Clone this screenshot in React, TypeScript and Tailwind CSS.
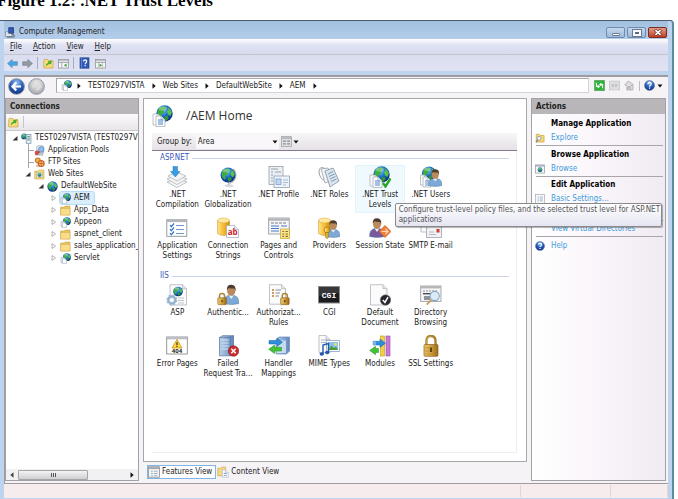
import type { ReactNode } from 'react';
import clsx from 'clsx';

type IconProps = { className?: string };

/* ---------- shared icon parts ---------- */

function Defs() {
  return (
    <svg className="absolute h-0 w-0" aria-hidden="true">
      <defs>
        <radialGradient id="sea" cx="40%" cy="30%" r="75%">
          <stop offset="0" stopColor="#7fd0ff" />
          <stop offset="0.45" stopColor="#1f6fd0" />
          <stop offset="1" stopColor="#08246e" />
        </radialGradient>
        <linearGradient id="gold" x1="0" x2="1">
          <stop offset="0" stopColor="#ffe58a" />
          <stop offset="0.5" stopColor="#f5bb35" />
          <stop offset="1" stopColor="#c88a10" />
        </linearGradient>
        <linearGradient id="lock" x1="0" x2="1">
          <stop offset="0" stopColor="#e8c56a" />
          <stop offset="0.5" stopColor="#d3a140" />
          <stop offset="1" stopColor="#95661a" />
        </linearGradient>
        <linearGradient id="blueBox" x1="0" x2="1">
          <stop offset="0" stopColor="#b9cfe8" />
          <stop offset="1" stopColor="#5f86bd" />
        </linearGradient>
        <radialGradient id="nav" cx="50%" cy="25%" r="75%">
          <stop offset="0" stopColor="#9cc4f2" />
          <stop offset="0.5" stopColor="#2c63bd" />
          <stop offset="1" stopColor="#0f2f7c" />
        </radialGradient>
        <radialGradient id="navOff" cx="50%" cy="30%" r="75%">
          <stop offset="0" stopColor="#ededed" />
          <stop offset="1" stopColor="#a3a3a6" />
        </radialGradient>
      </defs>
    </svg>
  );
}

function Globe({ cx, cy, r }: { cx: number; cy: number; r: number }) {
  return (
    <g transform={`translate(${cx} ${cy}) scale(${r / 10})`}>
      <circle r="10" fill="url(#sea)" />
      <path d="M-8 -5 Q-4 -9 0 -9 L2 -6 L-1 -4 L0 -1 L-4 1 L-3 5 L-5 6 L-8 2 Z" fill="#3fae3a" />
      <path d="M3 -8 Q8 -6 9 -1 L7 3 L4 1 L3 -3 L5 -5 Z" fill="#59c24c" />
      <path d="M0 3 L4 3 L5 6 L2 9 L0 7 Z" fill="#2e9636" />
      <ellipse cx="-2" cy="-6" rx="5" ry="2.5" fill="#fff" opacity="0.3" />
    </g>
  );
}

function Padlock({ x, y }: { x: number; y: number }) {
  return (
    <g transform={`translate(${x} ${y})`}>
      <path d="M2 5 V3 Q2 0.8 4.5 0.8 Q7 0.8 7 3 V5" fill="none" stroke="#a98331" strokeWidth="1.5" />
      <rect x="0.3" y="5" width="8.6" height="7" rx="1" fill="url(#lock)" stroke="#8d6420" strokeWidth="0.6" />
      <path d="M4.6 7.3 V9.6" stroke="#4e3508" strokeWidth="1.2" />
    </g>
  );
}

function Person({ x, y, s = 1, fill = '#7da9d6' }: { x: number; y: number; s?: number; fill?: string }) {
  return (
    <g transform={`translate(${x} ${y}) scale(${s})`}>
      <path d="M0 19 Q0 12 5 11 H10 Q15 12 15 19 Q8 21 0 19 Z" fill={fill} stroke="#56799f" strokeWidth="0.5" />
      <path d="M5 11 L7.5 14.5 L10 11 Z" fill="#e8f0f8" />
      <ellipse cx="7.5" cy="6.5" rx="4" ry="5" fill="#b98a5c" />
      <path d="M3.3 6 Q3 0.6 7.8 0.8 Q12.4 1 11.7 7 L10.6 4.4 Q7 4.6 5 3.8 Z" fill="#4d3c30" />
    </g>
  );
}

function Database({ x, y }: { x: number; y: number }) {
  return (
    <g transform={`translate(${x} ${y})`}>
      <path d="M0 3 V16 Q6 20 12 16 V3 Z" fill="url(#gold)" stroke="#c58e20" strokeWidth="0.5" />
      <ellipse cx="6" cy="3" rx="6" ry="2.4" fill="#ffe9a0" stroke="#d6a02c" strokeWidth="0.5" />
    </g>
  );
}

function Page({ x, y, w, h }: { x: number; y: number; w: number; h: number }) {
  return (
    <g transform={`translate(${x} ${y})`}>
      <path d={`M0 0 H${w - 4} L${w} 4 V${h} H0 Z`} fill="#fbfbfc" stroke="#a5a9b0" strokeWidth="0.7" />
      <path d={`M${w - 4} 0 V4 H${w}`} fill="#e3e5ea" stroke="#a5a9b0" strokeWidth="0.6" />
    </g>
  );
}

function Big({ children }: { children: ReactNode }) {
  return (
    <svg viewBox="0 0 22 22" className="h-[22px] w-[22px] shrink-0" aria-hidden="true">
      {children}
    </svg>
  );
}

function Small({ children, className = 'h-[11px] w-[11px]' }: { children: ReactNode; className?: string }) {
  return (
    <svg viewBox="0 0 16 16" className={clsx('shrink-0', className)} aria-hidden="true">
      {children}
    </svg>
  );
}

/* ---------- feature icons ---------- */

const CompilationIcon = () => (
  <Big>
    <g fill="#f4f5f6" stroke="#a8acb0" strokeWidth="0.7">
      <path d="M1 16 L11 12 L21 16 L11 21.5 Z" />
      <path d="M1 13 L11 9 L21 13 L11 18.5 Z" />
      <path d="M2 10 L11 6 L20 10 L11 15 Z" />
    </g>
    <path d="M7 0.5 H11.5 V5.5 H14 L9.3 11 L4.5 5.5 H7 Z" fill="#3c9be0" stroke="#1b74bd" strokeWidth="0.5" />
  </Big>
);

const GlobalizationIcon = () => (
  <Big>
    <path d="M8 19 Q12 17.5 16 19 Q18 21 12 21.3 Q6 21 8 19 Z" fill="#d9dadd" />
    <path d="M16.5 3 Q21 9 17 14.5 Q15 17 11.5 17.3 V19" fill="none" stroke="#b7b9bf" strokeWidth="1.3" />
    <Globe cx={11} cy={9} r={7.5} />
  </Big>
);

const ProfileIcon = () => (
  <Big>
    <rect x="1" y="0.5" width="14" height="18" fill="#eceff2" stroke="#98a0aa" strokeWidth="0.8" />
    <path d="M3 3 H10 M3 6 H5 M7 6 H13 M3 9 H5 M3 12 H5 M3 15 H5" stroke="#9aa4b0" strokeWidth="1.1" />
    <rect x="6" y="10" width="15.5" height="11.5" fill="#eef3f9" stroke="#8ea2ba" strokeWidth="0.8" />
    <rect x="8" y="13" width="5" height="5.5" fill="#c3d8ef" stroke="#6e97c7" strokeWidth="0.7" />
    <path d="M15 14 H20 M15 16.5 H20 M15 19 H18" stroke="#9db3cc" strokeWidth="0.9" />
  </Big>
);

const RolesIcon = () => (
  <Big>
    <path d="M8 3 Q1 -1 1 6 Q2 13 6 14" fill="none" stroke="#8c949c" strokeWidth="0.9" />
    <path d="M3 3 L10 2 L14 14 L7 17 Z" fill="#f0f2f4" stroke="#9aa3ad" strokeWidth="0.8" />
    <path d="M7 5 L15 2 L21 15 L12 21 Z" fill="#dbe5ee" stroke="#7f91a3" strokeWidth="0.8" />
    <path d="M10 8 L15 5.5 M11 10.5 L16.5 8 M12 13 L17.5 10.5 M13 15.5 L18.5 13" stroke="#7390b0" strokeWidth="0.9" />
  </Big>
);

const TrustIcon = () => (
  <Big>
    <Globe cx={12.5} cy={8.5} r={8.2} />
    <Page x={1} y={9} w={9} h={11} />
    <Page x={4} y={11} w={9} h={10.5} />
    <path d="M6 15 H11 M6 17 H11 M6 19 H11" stroke="#4a87d0" strokeWidth="1" />
    <path d="M14 17 L16.5 20.5 L21.5 12.5" fill="none" stroke="#27a627" strokeWidth="2.4" />
  </Big>
);

const UsersIcon = () => (
  <Big>
    <Globe cx={9} cy={7.5} r={7} />
    <Page x={0.5} y={9} w={8} h={10} />
    <Page x={3} y={11} w={8} h={10} />
    <path d="M5 15 H9 M5 17 H9 M5 19 H9" stroke="#4a87d0" strokeWidth="0.9" />
    <Person x={8.5} y={2.5} s={0.9} />
  </Big>
);

const SettingsIcon = () => (
  <Big>
    <rect x="0.8" y="2.8" width="20" height="16.5" fill="#fff" stroke="#8f9296" strokeWidth="0.9" />
    <path d="M1 4 H20.5" stroke="#b4b8bd" strokeWidth="2.2" />
    <path d="M4 8 L5.3 9.8 L8 6.5 M4 12 L5.3 13.8 L8 10.5 M4 16 L5.3 17.8 L8 14.5" fill="none" stroke="#2b6fbe" strokeWidth="1.2" />
    <path d="M10 8.5 H18 M10 12.5 H18 M10 16.5 H18" stroke="#6f9acb" strokeWidth="1.2" />
  </Big>
);

const ConnectionIcon = () => (
  <Big>
    <Database x={0.5} y={0.5} />
    <Page x={9.5} y={8.5} w={12} h={12} />
    <text x="15.6" y="18" textAnchor="middle" fontSize="8" fontWeight="700" fill="#c9222a" fontFamily="Open Sans">ab</text>
  </Big>
);

const PagesIcon = () => (
  <Big>
    <rect x="0.7" y="1" width="20.5" height="16" fill="#f5f6f8" stroke="#8f9296" strokeWidth="0.8" />
    <path d="M1 2.6 H21" stroke="#b3b6bb" strokeWidth="2.4" />
    <path d="M3 6 H19" stroke="#777c84" strokeWidth="1" strokeDasharray="3 1" />
    <path d="M3 9 H11 M13 9 H19 M3 11.5 H11 M3 14 H11" stroke="#4a78c4" strokeWidth="1" />
    <rect x="12.5" y="12" width="9" height="9.5" fill="#fbe789" stroke="#c7a02c" strokeWidth="0.7" />
    <path d="M14.3 14.5 H16.2 M17.5 14.5 H20 M14.3 17 H16.2 M17.5 17 H20 M14.3 19.4 H16.2 M17.5 19.4 H20" stroke="#8a7330" strokeWidth="1.1" />
  </Big>
);

const ProvidersIcon = () => (
  <Big>
    <Database x={0.5} y={0.5} />
    <Person x={8.5} y={2.5} s={0.9} />
    <circle cx="9" cy="13" r="3" fill="url(#gold)" stroke="#9c7318" strokeWidth="0.7" />
    <path d="M7.6 15.5 H10.4 V20.5 L9 21.7 L7.6 20.5 Z" fill="#ddb23c" stroke="#9c7318" strokeWidth="0.6" />
  </Big>
);

const SessionIcon = () => (
  <Big>
    <Person x={0.5} y={0.5} s={1} fill="#76599f" />
    <path d="M16 8.5 L22 14.5 L16 20.5 L10 14.5 Z" fill="#f0803c" stroke="#c6561c" strokeWidth="0.7" />
    <path d="M12.5 14.5 H19 M16.5 12 L19 14.5 L16.5 17" fill="none" stroke="#ffd9b8" strokeWidth="1.1" />
  </Big>
);

const SmtpIcon = () => (
  <Big>
    <Page x={1} y={3} w={11} h={12} />
    <rect x="6.5" y="8" width="15" height="12.5" fill="#f0f2f5" stroke="#9ea3ab" strokeWidth="0.8" />
    <rect x="16.5" y="12" width="3" height="3.5" fill="#d33a32" />
    <path d="M9 15 H14 M9 17.5 H16" stroke="#a9b3c0" strokeWidth="0.9" />
  </Big>
);

const AspIcon = () => (
  <Big>
    <Page x={4} y={0.7} w={16.5} h={20.3} />
    <Globe cx={12} cy={7.5} r={4.8} />
    <path d="M12 14 H18 M12 16.5 H18 M12 19 H18" stroke="#b9bec6" strokeWidth="0.9" />
    <circle cx="5.8" cy="16" r="3.6" fill="#dce8f2" stroke="#8fafca" strokeWidth="2.2" />
    <circle cx="5.8" cy="16" r="4.9" fill="none" stroke="#9fbbd3" strokeWidth="1.3" strokeDasharray="2 1.85" />
    <circle cx="5.8" cy="16" r="1.5" fill="#fff" />
  </Big>
);

const AuthenticationIcon = () => (
  <Big>
    <Person x={6.5} y={0} s={1.03} />
    <Padlock x={0.5} y={8.7} />
  </Big>
);

const AuthorizationIcon = () => (
  <Big>
    <Page x={1.5} y={0.7} w={16} h={19.5} />
    <path d="M4 6 H6 M4 9 H6 M4 12 H6" stroke="#c8742a" strokeWidth="1.5" />
    <path d="M7.5 6 H13 M7.5 9 H12 M7.5 12 H11" stroke="#878d96" strokeWidth="1" />
    <Padlock x={12.3} y={8.7} />
  </Big>
);

const CgiIcon = () => (
  <Big>
    <rect x="0.5" y="2.5" width="21" height="16.5" fill="#1c1c1e" stroke="#8c8c8f" strokeWidth="1" />
    <path d="M1 3 H21 V9 L1 12 Z" fill="#4a4a4d" opacity="0.6" />
    <text x="11" y="13.5" textAnchor="middle" fontSize="8" fontWeight="700" fill="#fff" fontFamily="Liberation Mono">CGI</text>
  </Big>
);

const DefaultDocIcon = () => (
  <Big>
    <Page x={1.5} y={0.7} w={16.5} h={20.3} />
    <circle cx="16.5" cy="16" r="5.3" fill="#25272b" stroke="#84888e" strokeWidth="0.6" />
    <path d="M13.8 16 L16 18.4 L19 13.2" fill="none" stroke="#fff" strokeWidth="1.5" />
  </Big>
);

const DirectoryIcon = () => (
  <Big>
    <rect x="0.7" y="2" width="20.3" height="15.5" fill="#f4f4f6" stroke="#94979c" strokeWidth="0.8" />
    <path d="M1 3.3 H21" stroke="#b4b6ba" strokeWidth="2.2" />
    <path d="M3 7 H18" stroke="#8b8f96" strokeWidth="1.2" strokeDasharray="2 1" />
    <path d="M3 9.7 H12" stroke="#3d4046" strokeWidth="1.3" />
    <rect x="4" y="12" width="6" height="4" fill="#8f9298" />
    <circle cx="14.7" cy="12" r="4.6" fill="#d6e9f8" fillOpacity="0.9" stroke="#8aa6c4" strokeWidth="1.1" />
    <path d="M11.5 15.5 L6.8 20.6" stroke="#c89a5a" strokeWidth="1.8" />
  </Big>
);

const ErrorPagesIcon = () => (
  <Big>
    <rect x="0.7" y="2" width="20.6" height="17" fill="#fff" stroke="#8b8e93" strokeWidth="0.9" />
    <path d="M1 3.3 H21" stroke="#bbbdc2" strokeWidth="2" />
    <path d="M11 4.5 L16 13 H6 Z" fill="#ffd93b" stroke="#bd9414" strokeWidth="0.8" />
    <path d="M11 7.3 V10.2 M11 11 V12" stroke="#1f1f1f" strokeWidth="1.1" />
    <text x="11" y="18.4" textAnchor="middle" fontSize="6" fontWeight="700" fill="#222" fontFamily="Open Sans">404</text>
  </Big>
);

const FailedIcon = () => (
  <Big>
    <path d="M2.5 2.5 L5.5 0.7 H16.5 V19 L13.5 20.8 H2.5 Z" fill="url(#blueBox)" stroke="#54719a" strokeWidth="0.7" />
    <path d="M13.5 2.5 V20.5 M2.5 2.5 H13.5 L16.5 0.7" fill="none" stroke="#56749f" strokeWidth="0.6" />
    <path d="M4.5 5 H11.5 M4.5 8 H11.5 M4.5 11 H11.5 M4.5 14 H11.5" stroke="#dbe7f5" strokeWidth="1" />
    <circle cx="16.5" cy="16" r="5.2" fill="#cc2a2e" stroke="#8c1418" strokeWidth="0.6" />
    <path d="M14.3 13.8 L18.7 18.2 M18.7 13.8 L14.3 18.2" stroke="#fff" strokeWidth="1.6" />
  </Big>
);

const HandlerIcon = () => (
  <Big>
    <path d="M8 4.5 L11 2 H21.5 V16 L18.5 19 H8 Z" fill="url(#blueBox)" stroke="#6289b8" strokeWidth="0.7" />
    <path d="M9 5.5 H18 V18 H9 Z" fill="#d7e9f8" opacity="0.8" />
    <path d="M1 5.5 H9 V3 L14.5 7.3 L9 11.5 V9 H1 Z" fill="#2d8fdc" stroke="#1a65a6" strokeWidth="0.5" />
    <path d="M13.5 12.3 H6.5 V10 L0.7 14.3 L6.5 18.5 V16 H13.5 Z" fill="#42c236" stroke="#239022" strokeWidth="0.5" />
  </Big>
);

const MimeIcon = () => (
  <Big>
    <Page x={1} y={0.5} w={11} h={17} />
    <path d="M3 5 H9 M3 7.5 H9" stroke="#a4b2c8" strokeWidth="1" />
    <rect x="8.5" y="5.5" width="13" height="11" fill="#fff" stroke="#8da4be" strokeWidth="0.8" />
    <rect x="10" y="7" width="10" height="8" fill="#86c4ee" />
    <path d="M10 15 L13.5 10.5 L16 13 L18 11.5 L20 15 Z" fill="#4c9a3d" />
    <circle cx="17.6" cy="9.3" r="1.3" fill="#ffe04a" />
    <path d="M5 18.5 V10 L10.5 8.5 V17" fill="none" stroke="#2458b0" strokeWidth="1.4" />
    <ellipse cx="3.8" cy="19" rx="2.2" ry="1.7" fill="#2458b0" />
    <ellipse cx="9.2" cy="17.5" rx="2.2" ry="1.7" fill="#2458b0" />
  </Big>
);

const ModulesIcon = () => (
  <Big>
    <rect x="11.5" y="1" width="4" height="20" fill="#f3cf48" stroke="#c39a21" strokeWidth="0.6" />
    <rect x="17" y="1" width="4" height="20" fill="#c87ad6" stroke="#9b4cac" strokeWidth="0.6" />
    <path d="M4 6.3 H11 V4 L16.5 8.2 L11 12.4 V10 H4 Z" fill="#2d8fdc" stroke="#1a65a6" strokeWidth="0.5" />
    <path d="M4 6.3 V10 M6 6.3 V10" stroke="#fff" strokeWidth="0.7" />
    <path d="M9.5 13.5 H6.5 V11.3 L0.7 15.5 L6.5 19.7 V17.5 H9.5 Z" fill="#42c236" stroke="#239022" strokeWidth="0.5" />
  </Big>
);

const SslIcon = () => (
  <Big>
    <path d="M6.5 10 V6 Q6.5 1 11 1 Q15.5 1 15.5 6 V10" fill="none" stroke="#a9822f" strokeWidth="2.4" />
    <path d="M7 9 V6 Q7 1.8 10.6 1.6" fill="none" stroke="#ecd28a" strokeWidth="0.7" />
    <rect x="4" y="9.5" width="14" height="11.8" rx="1" fill="url(#lock)" stroke="#8d6420" strokeWidth="0.7" />
    <path d="M4.5 13 H17.5 M4.5 16 H17.5 M4.5 19 H17.5" stroke="#b98831" strokeWidth="0.7" />
    <path d="M11 12.6 V17" stroke="#4e3508" strokeWidth="1.7" />
  </Big>
);

/* ---------- small icons ---------- */

const UpFolderIcon = () => (
  <Small>
    <path d="M1 4 L2 2 H7 L8 4 H14.5 V14.5 H1 Z" fill="#f6dc7c" stroke="#c49a34" strokeWidth="0.9" />
    <path d="M4 12 Q4 8 8 7 L7 5 L13 3.5 L11.5 9.5 L10 8.3 Q7 9.5 4 12 Z" fill="#3fae2d" />
  </Small>
);

const FolderIcon = () => (
  <Small>
    <path d="M1 3 H6 L7.5 1.5 H14.5 V14.5 H1 Z" fill="#e9c463" stroke="#c79b3a" strokeWidth="0.8" />
    <path d="M1 5 H14.5 V14.5 H1 Z" fill="#f9dd8b" stroke="#d0a748" strokeWidth="0.7" />
  </Small>
);

const PaneIcon = ({ arrow = 'left' }: { arrow?: 'left' | 'right' }) => (
  <Small>
    <rect x="0.7" y="2" width="14.6" height="12.6" fill="#f6f7f8" stroke="#85888e" />
    <path d="M1 4 H15 M1 6.5 H15" stroke="#a8abb1" strokeWidth="1.4" />
    {arrow === 'left' ? <path d="M5.5 7 V14" stroke="#85888e" /> : <path d="M5 7 V14 M11 7 V14" stroke="#a8abb1" />}
    {arrow === 'left' ? <path d="M12.5 8 V13 L8.5 10.5 Z" fill="#3aa63a" /> : <path d="M6.5 8 V13 L10.5 10.5 Z" fill="#3aa63a" />}
  </Small>
);

const SiteIcon = ({ className }: IconProps) => (
  <Small className={className}>
    <Globe cx={10} cy={6} r={5.7} />
    <path d="M1.5 6.5 H5.5 L7.5 8.5 V14 H1.5 Z" fill="#f4f6f8" stroke="#9aa4b0" strokeWidth="0.8" />
    <path d="M3.5 8.5 H7.5 L9.5 10.5 V15.5 H3.5 Z" fill="#fff" stroke="#9aa4b0" strokeWidth="0.8" />
  </Small>
);

const WorldIcon = () => (
  <Small><Globe cx={8} cy={8} r={7.5} /></Small>
);

const ServerIcon = () => (
  <Small>
    <Globe cx={4.5} cy={5} r={4.2} />
    <rect x="7.5" y="2" width="7" height="13" fill="#e4edf5" stroke="#7490ac" />
    <path d="M9 5 H13 M9 7.5 H13 M9 10 H13" stroke="#4b8f63" strokeWidth="1.2" />
  </Small>
);

const PoolsIcon = () => (
  <Small>
    <rect x="4" y="1" width="10" height="11" rx="2" fill="#e9eef4" stroke="#8fa0b4" />
    <circle cx="10.5" cy="6.5" r="4" fill="#8fbce6" stroke="#5180b4" />
    <path d="M1 10 Q4 6 9 10 L6 15 H2 Z" fill="#c9514a" />
    <path d="M7 12 H13 V15 H7 Z" fill="#cdd3da" stroke="#8791a0" strokeWidth="0.6" />
  </Small>
);

const FtpIcon = () => (
  <Small>
    <circle cx="5.5" cy="5" r="3.5" fill="#f3b24e" stroke="#c8741f" strokeWidth="1.6" />
    <circle cx="10.5" cy="9.5" r="4.3" fill="#f7c27a" stroke="#cc6420" strokeWidth="1.7" />
    <path d="M7 9.5 H14 M10.5 6 V13 M3 13 H8" stroke="#b9551b" strokeWidth="1.1" />
  </Small>
);

const WebSitesIcon = () => (
  <Small>
    <path d="M1 3 H6 L7.5 1.5 H14.5 V14.5 H1 Z" fill="#f6da86" stroke="#c79b3a" strokeWidth="0.8" />
    <rect x="4" y="5" width="8" height="7" fill="#dff0df" stroke="#8aa47a" strokeWidth="0.6" />
    <Globe cx={8} cy={8.5} r={2.8} />
  </Small>
);

const HelpIcon = ({ className }: IconProps) => (
  <Small className={className}>
    <circle cx="8" cy="8" r="7.3" fill="url(#nav)" stroke="#6a7fa8" strokeWidth="0.8" />
    <path d="M5.6 6 Q5.8 3.6 8.1 3.6 Q10.5 3.7 10.4 5.9 Q10.3 7.2 9 8 Q8.1 8.6 8.1 9.7 M8.1 11 V12.8" fill="none" stroke="#fff" strokeWidth="1.8" />
  </Small>
);

const BookHelpIcon = () => (
  <Small className="h-[12px] w-[11px]">
    <rect x="1.5" y="0.5" width="13" height="15" fill="#3059b8" stroke="#1c3a86" />
    <path d="M3.5 1 V15" stroke="#7f9be0" />
    <path d="M6.5 5.8 Q6.8 3.5 9 3.5 Q11.3 3.7 11.1 5.9 Q11 7 9.8 7.9 Q9 8.6 9 9.7 M9 11 V12.8" fill="none" stroke="#fff" strokeWidth="1.7" />
  </Small>
);

const ComputerIcon = () => (
  <Small>
    <rect x="1" y="7" width="9" height="7" fill="#dfe4ea" stroke="#7b8592" />
    <rect x="5.5" y="1" width="7" height="8" fill="#3357b6" stroke="#1c306c" />
    <path d="M3 14.5 H14 M9 9 L14 13" stroke="#59616c" strokeWidth="1.6" />
  </Small>
);

const ArrowIcon = ({ dir, color }: { dir: 'left' | 'right'; color: string }) => (
  <Small>
    <path
      d={dir === 'left' ? 'M0.8 8 L7.5 2 V5.3 H15 V10.7 H7.5 V14 Z' : 'M15.2 8 L8.5 2 V5.3 H1 V10.7 H8.5 V14 Z'}
      fill={color}
      stroke="#55708a"
      strokeWidth="0.7"
    />
  </Small>
);

const NavCircle = ({ dir }: { dir: 'left' | 'right' }) => (
  <svg viewBox="0 0 18 18" className="h-[17px] w-[17px]" aria-hidden="true">
    <circle cx="9" cy="9" r="8.3" fill={dir === 'left' ? 'url(#nav)' : 'url(#navOff)'} stroke="#8b93a6" strokeWidth="1" />
    <path
      d={dir === 'left' ? 'M13.8 9 H5 M8.8 4.9 L4.7 9 L8.8 13.1' : 'M4.2 9 H13 M9.2 4.9 L13.3 9 L9.2 13.1'}
      fill="none"
      stroke={dir === 'left' ? '#fff' : '#dcdcde'}
      strokeWidth="2.3"
    />
  </svg>
);

const RefreshIcon = () => (
  <Small>
    <rect x="0.5" y="0.5" width="15" height="15" rx="1" fill="#2fb338" stroke="#5f9d60" />
    <path d="M3.5 4 V9.5 H7 M5.3 11.5 L7.8 9.5 L5.3 7.3 M12.5 12 V6.5 H9 M10.7 4.4 L8.4 6.5 L10.7 8.6" fill="none" stroke="#fff" strokeWidth="1.5" />
  </Small>
);

const StopIcon = () => (
  <Small>
    <rect x="0.5" y="1.5" width="15" height="13" fill="#dedee0" stroke="#c4c4c7" />
    <path d="M4 6 L7 10 M7 6 L4 10 M9 6 L12 10 M12 6 L9 10" stroke="#b0b0b4" strokeWidth="1.2" />
  </Small>
);

const HomeIcon = () => (
  <Small>
    <path d="M1 7 L6 1.5 L13 6 V14.5 H4 V8 Z" fill="#dddde0" stroke="#a2a2a8" />
    <path d="M6 14 V10 H9 V14 M10 8 H12" fill="none" stroke="#909096" />
  </Small>
);

const ExploreIcon = () => (
  <Small className="h-[10px] w-[10px]">
    <path d="M2 2 H7 L8.5 4 H14.5 V14.5 H2 Z" fill="#f5d97c" stroke="#c49a34" />
    <circle cx="6.5" cy="8.5" r="3.2" fill="#e8f3fb" stroke="#76808c" />
    <path d="M4.5 11 L1.5 15" stroke="#76808c" strokeWidth="1.8" />
  </Small>
);

const BrowseIcon = () => (
  <Small className="h-[10px] w-[10px]">
    <rect x="0.7" y="1.5" width="14.6" height="13" fill="#f6f9fb" stroke="#85888e" />
    <path d="M1 3 H15" stroke="#9aa5b4" strokeWidth="2" />
    <Globe cx={8} cy={9} r={3.8} />
  </Small>
);

const BasicIcon = () => (
  <Small className="h-[10px] w-[10px]">
    <rect x="1" y="1" width="14" height="14" fill="#f7f8f9" stroke="#9a9ea5" />
    <path d="M4 5 H6 M7.5 5 H12.5 M4 8 H6 M7.5 8 H12.5 M4 11 H6 M7.5 11 H12.5" stroke="#8fa5be" strokeWidth="1.3" />
  </Small>
);

const FeaturesIcon = () => (
  <Small className="h-[12px] w-[12px]">
    <rect x="0.7" y="1" width="14.6" height="14" fill="#f1f2f4" stroke="#83868c" />
    <path d="M1 2.8 H15" stroke="#a3a6ad" strokeWidth="2.5" />
    <path d="M4 7 H6.5 M8 7 H12.5 M4 10 H6.5 M8 10 H12.5 M4 13 H6.5 M8 13 H12.5" stroke="#9db0c8" strokeWidth="1.5" />
  </Small>
);

const ContentIcon = () => (
  <Small className="h-[12px] w-[12px]">
    <path d="M1 3 H5 L6.5 1.5 H11.5 V13 H1 Z" fill="#f4d988" stroke="#c79b3a" strokeWidth="0.8" />
    <Page x={7} y={5} w={8} h={10} />
    <path d="M9 10 H13 M9 12.5 H13" stroke="#5a8bc9" />
  </Small>
);

const ViewsIcon = () => (
  <Small>
    <rect x="0.7" y="1" width="14.6" height="14" fill="#dfe0e3" stroke="#97979c" />
    <path d="M1 3 H15" stroke="#aaaab0" strokeWidth="2" />
    <path d="M3 7.5 H7 M9 7.5 H13 M3 11.5 H7 M9 11.5 H13" stroke="#84888f" strokeWidth="2" />
  </Small>
);

const Caret = ({ dir }: { dir: 'down' | 'right' | 'left' }) => (
  <svg viewBox="0 0 6 6" className="h-[6px] w-[6px] shrink-0" aria-hidden="true">
    {dir === 'down' && <path d="M0.5 1.5 H5.5 L3 4.5 Z" fill="#111" />}
    {dir === 'right' && <path d="M1.5 0.3 V5.7 L4.7 3 Z" fill="#111" />}
    {dir === 'left' && <path d="M4.5 0.3 V5.7 L1.3 3 Z" fill="#444" />}
  </svg>
);

/* ---------- data ---------- */

type Node = { label: string; level: number; icon: () => ReactNode; state: 'open' | 'closed' | 'leaf'; selected?: boolean };

const tree: Node[] = [
  { label: 'TEST0297VISTA (TEST0297VIS', level: 0, icon: () => <ServerIcon />, state: 'open' },
  { label: 'Application Pools', level: 1, icon: () => <PoolsIcon />, state: 'leaf' },
  { label: 'FTP Sites', level: 1, icon: () => <FtpIcon />, state: 'leaf' },
  { label: 'Web Sites', level: 1, icon: () => <WebSitesIcon />, state: 'open' },
  { label: 'DefaultWebSite', level: 2, icon: () => <WorldIcon />, state: 'open' },
  { label: 'AEM', level: 3, icon: () => <SiteIcon />, state: 'closed', selected: true },
  { label: 'App_Data', level: 3, icon: () => <FolderIcon />, state: 'closed' },
  { label: 'Appeon', level: 3, icon: () => <SiteIcon />, state: 'closed' },
  { label: 'aspnet_client', level: 3, icon: () => <FolderIcon />, state: 'closed' },
  { label: 'sales_application_', level: 3, icon: () => <FolderIcon />, state: 'closed' },
  { label: 'Servlet', level: 3, icon: () => <SiteIcon />, state: 'closed' },
];

const indents = ['pl-[3px]', 'pl-[16px]', 'pl-[29px]', 'pl-[42px]'];

type Feature = { lines: string[]; icon: () => ReactNode; tip?: string[] };

const aspnet: Feature[] = [
  { lines: ['.NET', 'Compilation'], icon: CompilationIcon },
  { lines: ['.NET', 'Globalization'], icon: GlobalizationIcon },
  { lines: ['.NET Profile'], icon: ProfileIcon },
  { lines: ['.NET Roles'], icon: RolesIcon },
  {
    lines: ['.NET Trust', 'Levels'],
    icon: TrustIcon,
    tip: ['Configure trust-level policy files, and the selected trust level for ASP.NET', 'applications'],
  },
  { lines: ['.NET Users'], icon: UsersIcon },
  { lines: ['Application', 'Settings'], icon: SettingsIcon },
  { lines: ['Connection', 'Strings'], icon: ConnectionIcon },
  { lines: ['Pages and', 'Controls'], icon: PagesIcon },
  { lines: ['Providers'], icon: ProvidersIcon },
  { lines: ['Session State'], icon: SessionIcon },
  { lines: ['SMTP E-mail'], icon: SmtpIcon },
];

const iis: Feature[] = [
  { lines: ['ASP'], icon: AspIcon },
  { lines: ['Authentic...'], icon: AuthenticationIcon },
  { lines: ['Authorizat...', 'Rules'], icon: AuthorizationIcon },
  { lines: ['CGI'], icon: CgiIcon },
  { lines: ['Default', 'Document'], icon: DefaultDocIcon },
  { lines: ['Directory', 'Browsing'], icon: DirectoryIcon },
  { lines: ['Error Pages'], icon: ErrorPagesIcon },
  { lines: ['Failed', 'Request Tra...'], icon: FailedIcon },
  { lines: ['Handler', 'Mappings'], icon: HandlerIcon },
  { lines: ['MIME Types'], icon: MimeIcon },
  { lines: ['Modules'], icon: ModulesIcon },
  { lines: ['SSL Settings'], icon: SslIcon },
];

/* ---------- sections ---------- */

function TitleBar() {
  return (
    <header className="flex h-[18px] items-center bg-linear-to-b from-[#a3c0e0] to-[#b3cdea] pt-1 pl-px">
      <ComputerIcon />
      <h2 className="ml-[3px] flex-1">Computer Management</h2>
      <div className="mr-px flex gap-[2px] self-start pt-[2px]">
        <button aria-label="Minimize" className="flex h-[11px] w-[19px] items-center justify-center rounded-[2px] border border-[#7089ad] bg-linear-to-b from-[#c6d8ec] to-[#9db9dc]">
          <span className="mt-[3px] h-[3px] w-[8px] rounded-[1px] border border-[#6b7b90] bg-white" />
        </button>
        <button aria-label="Maximize" className="flex h-[11px] w-[19px] items-center justify-center rounded-[2px] border border-[#7089ad] bg-linear-to-b from-[#c6d8ec] to-[#9db9dc]">
          <span className="h-[6px] w-[8px] border-2 border-[#f7f9fb] bg-[#5b6b80] outline outline-[#6b7b90]" />
        </button>
        <button aria-label="Close" className="flex h-[11px] w-[19px] items-center justify-center rounded-[2px] border border-[#7c2a22] bg-linear-to-b from-[#e09a88] to-[#c23c22]">
          <svg viewBox="0 0 8 7" className="h-[7px] w-[8px]" aria-hidden="true">
            <path d="M1 0.8 L7 6.2 M7 0.8 L1 6.2" stroke="#5d2a26" strokeWidth="2.8" />
            <path d="M1.4 1.1 L6.6 5.9 M6.6 1.1 L1.4 5.9" stroke="#fff" strokeWidth="1.6" />
          </svg>
        </button>
      </div>
    </header>
  );
}

function MenuBar() {
  const menus = [['F', 'ile'], ['A', 'ction'], ['V', 'iew'], ['H', 'elp']];
  return (
    <nav className="flex h-[16px] items-center gap-[11px] border-b border-[#c3c6cb] bg-linear-to-b from-white via-[#dfe2f2] via-40% to-[#d8dbee] pl-[6px]">
      {menus.map(([key, rest]) => (
        <button key={key}><u>{key}</u>{rest}</button>
      ))}
    </nav>
  );
}

function ToolBar() {
  return (
    <div className="flex h-[16px] items-center bg-linear-to-b from-[#dadef0] to-[#e0e2f2] pl-[3px]">
      <button aria-label="Back"><ArrowIcon dir="left" color="#3fa9e8" /></button>
      <button aria-label="Forward" className="ml-1"><ArrowIcon dir="right" color="#96999e" /></button>
      <span className="ml-1 h-3 w-px bg-[#a9acb8]" />
      <button aria-label="Up one level" className="ml-[5px]"><UpFolderIcon /></button>
      <button aria-label="Show tree" className="ml-1"><PaneIcon /></button>
      <span className="ml-1 h-3 w-px bg-[#a9acb8]" />
      <button aria-label="Help" className="ml-[5px]"><BookHelpIcon /></button>
      <button aria-label="Show actions" className="ml-[5px]"><PaneIcon arrow="right" /></button>
    </div>
  );
}

function AddressBar() {
  const crumbs = ['TEST0297VISTA', 'Web Sites', 'DefaultWebSite', 'AEM'];
  return (
    <div className="flex h-[21px] items-start pt-px pl-[3px]">
      <button aria-label="Back"><NavCircle dir="left" /></button>
      <button aria-label="Forward" className="ml-[3px]"><NavCircle dir="right" /></button>
      <nav aria-label="Path" className="ml-[11px] flex h-[15px] flex-1 items-center border border-[#a9a7ab] border-r-[#d5d3d7] border-b-[#d5d3d7] bg-white pl-1">
        <SiteIcon />
        <span className="ml-1"><Caret dir="right" /></span>
        {crumbs.map((crumb) => (
          <span key={crumb} className="flex items-center">
            <a href="#" className="mx-[6px]">{crumb}</a>
            <Caret dir="right" />
          </span>
        ))}
      </nav>
      <div className="flex h-[15px] items-center gap-1 pr-[5px] pl-[5px]">
        <button aria-label="Refresh"><RefreshIcon /></button>
        <button aria-label="Stop"><StopIcon /></button>
        <button aria-label="Home"><HomeIcon /></button>
        <span className="h-[10px] w-px bg-[#bdbbc0]" />
        <button aria-label="Help options" className="flex items-center gap-[2px]"><HelpIcon /><Caret dir="down" /></button>
      </div>
    </div>
  );
}

function TreeRow({ node }: { node: Node }) {
  return (
    <li className={clsx('flex h-3 items-center', indents[node.level])}>
      <span className="flex w-[12px] shrink-0 items-center justify-center">
        {node.state === 'leaf' ? (
          <svg viewBox="0 0 12 12" className="h-3 w-3" aria-hidden="true">
            <path d="M6.5 0 V12 M6.5 6.5 H12" stroke="#a6a6a6" fill="none" />
          </svg>
        ) : (
          <svg viewBox="0 0 6 6" className="h-[6px] w-[6px]" aria-hidden="true">
            {node.state === 'open' ? (
              <path d="M5.5 1 V5.5 H0.5 Z" fill="#333" />
            ) : (
              <path d="M1 0.5 V5.5 L4.5 3 Z" fill="#fff" stroke="#a0a0a0" strokeWidth="0.8" />
            )}
          </svg>
        )}
      </span>
      <button
        className={clsx(
          'flex h-3 items-center gap-[3px] pr-1 whitespace-nowrap',
          node.selected && 'rounded-[2px] bg-[#d9edfb] outline outline-[#b5dcf5]',
        )}
      >
        {node.icon()}
        {node.label}
      </button>
    </li>
  );
}

function Connections() {
  return (
    <aside className="flex w-[134px] shrink-0 flex-col overflow-hidden border border-[#a3a1a5] bg-white">
      <h3 className="flex h-[15px] shrink-0 items-center bg-[#b8b6b9] pl-1 font-bold">Connections</h3>
      <div className="flex h-[17px] shrink-0 items-center border-b border-[#c9c6ca] bg-linear-to-b from-[#fbf9fb] to-[#e9e6ea] pl-[2px]">
        <button aria-label="Up"><UpFolderIcon /></button>
        <span className="ml-1 h-3 w-px bg-[#c8c5c9]" />
      </div>
      <ul className="flex-1 pt-px">
        {tree.map((node) => <TreeRow key={node.label} node={node} />)}
      </ul>
      <div className="flex h-[11px] items-center bg-[#f1f0f2]">
        <button aria-label="Scroll left" className="flex w-[12px] justify-center"><Caret dir="left" /></button>
        <button aria-label="Scroll" className="flex h-[10px] w-[70px] items-center justify-center gap-px rounded-[1px] border border-[#a5a5a8] bg-linear-to-b from-[#f4f4f5] to-[#cfcfd2]">
          <span className="h-1 w-px bg-[#555]" />
          <span className="h-1 w-px bg-[#555]" />
          <span className="h-1 w-px bg-[#555]" />
        </button>
        <button aria-label="Scroll right" className="mr-[3px] ml-auto"><Caret dir="right" /></button>
      </div>
    </aside>
  );
}

function FeatureGroup({ title, items, className }: { title: string; items: Feature[]; className?: string }) {
  return (
    <section className={className}>
      <div className="flex h-[14px] items-center gap-[3px] pr-[7px] pl-[8px]">
        <h4 className="text-[#3a55b8]">{title}</h4>
        <span className="h-px flex-1 bg-[#ccd2ec]" />
      </div>
      <div className="grid max-w-[304px] grid-cols-6">
        {items.map((item) => (
          <div key={item.lines.join(' ')} className="relative h-[51px]">
            <button
              className={clsx(
                'flex h-[48px] w-full flex-col items-center gap-[2px] pt-px leading-[10px] whitespace-nowrap',
                item.tip && 'rounded-[2px] bg-[#f0f9fd] outline -outline-offset-1 outline-[#e0f2fa]',
              )}
            >
              {item.icon()}
              <span className="text-center">
                {item.lines.map((line) => <span key={line} className="block">{line}</span>)}
              </span>
            </button>
            {item.tip && (
              <div role="tooltip" className="absolute top-[38px] left-[40px] z-10 w-[267px] rounded-[2px] border border-[#8a8a8d] bg-linear-to-b from-white to-[#e4e5f1] px-[3px] py-px leading-[10px] whitespace-nowrap text-[#555] shadow-[1px_1px_1px_rgba(0,0,0,0.3)]">
                {item.tip.map((line) => <p key={line}>{line}</p>)}
              </div>
            )}
          </div>
        ))}
      </div>
    </section>
  );
}

function HomePane() {
  return (
    <main className="flex min-w-0 flex-1 flex-col">
      <div className="flex flex-1 flex-col border border-[#a9a7ab] bg-white pr-[9px] pb-[8px] pl-[8px]">
        <div className="flex h-[34px] items-center gap-[12px]">
          <svg viewBox="0 0 22 22" className="h-[22px] w-[22px]" aria-hidden="true">
            <Globe cx={12.5} cy={8.5} r={8.2} />
            <Page x={1} y={9} w={9} h={11} />
            <Page x={4} y={11} w={9} h={10.5} />
            <path d="M6 15 H11 M6 17 H11 M6 19 H11" stroke="#4a87d0" strokeWidth="1" />
          </svg>
          <h1 className="font-['Open_Sans',sans-serif] text-[12px] leading-4 text-[#333]">/AEM Home</h1>
        </div>
        <div className="flex h-[18px] shrink-0 items-center border-b border-[#857b8c] bg-linear-to-b from-[#f8f6f8] to-[#e5e1e6] pl-[5px]">
          <label htmlFor="group-by">Group by:</label>
          <div className="ml-1 flex h-[14px] w-[83px] items-center bg-[#f9f7fa] pr-px">
            <select id="group-by" className="min-w-0 flex-1 appearance-none pl-[2px] outline-none">
              <option>Area</option>
            </select>
            <Caret dir="down" />
          </div>
          <button aria-label="Views" className="ml-[2px] flex items-center gap-px"><ViewsIcon /><Caret dir="down" /></button>
        </div>
        <div className="flex-1 border-r border-b border-[#eeeef0]">
          <FeatureGroup title="ASP.NET" items={aspnet} />
          <FeatureGroup title="IIS" items={iis} className="pt-[2px]" />
        </div>
      </div>
      <div className="flex h-[19px] items-center gap-px pl-1">
        <button className="flex h-[14px] items-center gap-[2px] border border-[#7fb6e6] bg-white pr-[3px]"><FeaturesIcon />Features View</button>
        <button className="flex h-[14px] items-center gap-[2px]"><ContentIcon />Content View</button>
      </div>
    </main>
  );
}

function Action({ icon, children }: { icon?: ReactNode; children: ReactNode }) {
  return (
    <a href="#" className="flex h-[14px] items-center gap-[6px] pl-[3px] text-[#3d9bdc]">
      <span className="w-[10px]">{icon}</span>
      {children}
    </a>
  );
}

function Actions() {
  const rule = 'mr-[2px] ml-1 border-b border-[#a9a6ab]';
  return (
    <aside className="w-[135px] shrink-0 border border-[#a3a1a5] bg-linear-to-r from-white via-[#faf5fa] to-[#f0ebf2]">
      <h3 className="flex h-[15px] items-center bg-[#b8b6b9] pl-1 font-bold">Actions</h3>
      <div className={clsx('pt-[3px]', rule)}>
        <h4 className="-ml-1 flex h-[14px] items-center pl-[19px] font-bold text-black">Manage Application</h4>
        <div className="-ml-1"><Action icon={<ExploreIcon />}>Explore</Action></div>
      </div>
      <div className={clsx('pt-[2px]', rule)}>
        <h4 className="-ml-1 flex h-[14px] items-center pl-[19px] font-bold text-black">Browse Application</h4>
        <div className="-ml-1"><Action icon={<BrowseIcon />}>Browse</Action></div>
      </div>
      <div className={clsx('pt-px pb-[14px]', rule)}>
        <h4 className="-ml-1 flex h-[14px] items-center pl-[19px] font-bold text-black">Edit Application</h4>
        <div className="-ml-1"><Action icon={<BasicIcon />}>Basic Settings...</Action></div>
      </div>
      <div className={clsx('pt-px', rule)}>
        <div className="-ml-1"><Action>View Virtual Directories</Action></div>
      </div>
      <div className="pt-[2px]">
        <Action icon={<HelpIcon className="h-[10px] w-[10px]" />}>Help</Action>
      </div>
    </aside>
  );
}

export default function App() {
  return (
    <div className="flex min-h-screen flex-col overflow-hidden bg-white pr-1 font-['DejaVu_Sans_Condensed','DejaVu_Sans',sans-serif] text-[8px] leading-[12px] text-[#222]">
      <Defs />
      <p className="-mt-2 mb-[10px] -ml-[3px] font-['Liberation_Serif',serif] text-[17px] leading-[18px] font-bold whitespace-nowrap text-black">
        Figure 1.2: .NET Trust Levels
      </p>
      <div className="flex flex-1 flex-col rounded-tr-[4px] border-t border-r-2 border-t-[#4c5a68] border-r-[#5a8ba0] bg-[#bdd3ee] pr-1 pb-px pl-1">
        <TitleBar />
        <MenuBar />
        <ToolBar />
        <div className="mt-1 flex flex-1 flex-col border-t-2 border-b border-l border-[#9f9ca1] bg-[#f5f3f6]">
          <AddressBar />
          <div className="flex flex-1 gap-1 pr-[2px] pb-[2px]">
            <Connections />
            <HomePane />
            <Actions />
          </div>
        </div>
        <footer className="flex h-[14px] justify-end bg-[#f6ecee]">
          <span className="my-px w-[90px] border-l border-[#ddd5d8]" />
          <span className="my-px w-[58px] border-x border-[#ddd5d8]" />
        </footer>
      </div>
    </div>
  );
}
